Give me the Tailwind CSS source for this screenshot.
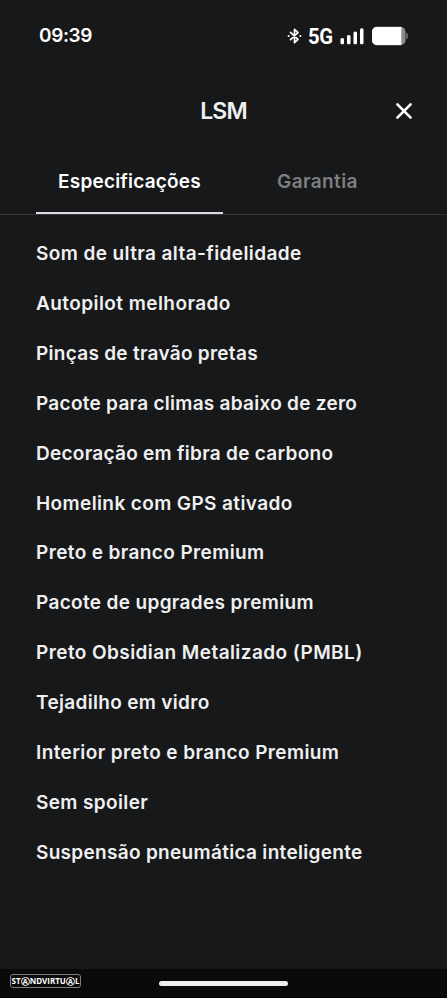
<!DOCTYPE html>
<html lang="pt">
<head>
<meta charset="utf-8">
<title>LSM</title>
<script src="https://cdn.jsdelivr.net/npm/@tailwindcss/browser@4"></script>
</head>
<body class="bg-[#17181a]">
<div class="flex h-[998px] w-[447px] flex-col overflow-hidden bg-[#17181a] font-[Inter,'Liberation_Sans',sans-serif] text-[#f0f0f1]">
  <header class="flex h-[72px] items-center justify-between pr-[38px] pl-[39px] text-white">
    <span class="text-[19px] leading-6 font-semibold tracking-[-0.4px]">09:39</span>
    <div class="flex items-center">
      <svg class="mr-[6px] h-[17px] w-[15px] -translate-y-[0.5px]" viewBox="0 0 15 17" fill="none" stroke="currentColor" stroke-width="1.7" stroke-linejoin="round" stroke-linecap="round"><path d="M3.500 4.800 11 11.800 7.500 15.200V1.800L11 5.200 3.500 12.200"/><path d="M1.600 8.500h.1M13.300 8.500h.1" stroke-width="2"/></svg>
      <span class="mr-[7px] w-[25px] pt-px font-[Roboto,sans-serif] text-[22px] leading-6 font-bold tracking-[-0.5px]"><span class="inline-block origin-left scale-x-[0.92]">5G</span></span>
      <svg class="mr-[8px] h-[17px] w-[24px] -translate-y-[0.5px]" viewBox="0 0 24 17" fill="currentColor"><rect x="0.500" y="10.500" width="3.500" height="6.500" rx="1.500"/><rect x="7" y="7.500" width="3.500" height="9.500" rx="1.500"/><rect x="13.500" y="4" width="3.500" height="13" rx="1.500"/><rect x="20" y="0.700" width="3.500" height="16.300" rx="1.500"/></svg>
      <svg class="h-[19px] w-[37px] -translate-y-[0.5px]" viewBox="0 0 37 19"><rect x="0" y="0.300" width="33.500" height="18.400" rx="5" fill="#8a8a8b"/><path d="M5 .3H29.300V18.700H5a5 5 0 0 1-5-5V5.300a5 5 0 0 1 5-5Z" fill="#fff"/><path d="M34.600 6.500c1.400.5 1.400 5.500 0 6Z" fill="#77787a" stroke="#77787a" stroke-width=".6"/></svg>
    </div>
  </header>
  <div class="grid h-[78px] grid-cols-[1fr_auto_1fr] items-center pr-[35px] pl-[35px]">
    <h1 class="col-start-2 text-[23px] leading-7 font-[570] tracking-[-0.9px]">LSM</h1>
    <svg class="-mt-px h-[16px] w-[16px] justify-self-end" viewBox="0 0 16 16" stroke="#fff" stroke-width="2.600" stroke-linecap="round"><path d="m1.400 1.400 13.200 13.200M14.600 1.400 1.400 14.600"/></svg>
  </div>
  <nav class="flex h-[65px] border-b border-[#343537] pl-[36px] text-[19px] font-[560]">
    <div class="flex h-[64px] w-[187px] justify-center border-b-2 border-[#dddae0] pt-[20px] leading-6 text-white"><span class="tracking-[0.2px]">Especificações</span></div>
    <div class="flex w-[189px] justify-center pt-[20px] leading-6 text-[#7e7f80]"><span class="tracking-[0.4px]">Garantia</span></div>
  </nav>
  <ul class="flex flex-1 flex-col pt-[14px] pl-[36px] text-[19px] leading-[49.900px] font-[560] whitespace-nowrap">
    <li><span class="tracking-[0.4px]">Som de ultra alta-fidelidade</span></li>
    <li><span class="tracking-[0.43px]">Autopilot melhorado</span></li>
    <li><span class="tracking-[0.28px]">Pinças de travão pretas</span></li>
    <li><span class="tracking-[0.27px]">Pacote para climas abaixo de zero</span></li>
    <li><span class="tracking-[0.27px]">Decoração em fibra de carbono</span></li>
    <li><span class="tracking-[0.39px]">Homelink com GPS ativado</span></li>
    <li><span class="tracking-[0.38px]">Preto e branco Premium</span></li>
    <li><span class="tracking-[0.34px]">Pacote de upgrades premium</span></li>
    <li><span class="tracking-[0.42px]">Preto Obsidian Metalizado (PMBL)</span></li>
    <li><span class="tracking-[0.32px]">Tejadilho em vidro</span></li>
    <li><span class="tracking-[0.4px]">Interior preto e branco Premium</span></li>
    <li><span class="tracking-[0.38px]">Sem spoiler</span></li>
    <li><span class="tracking-[0.31px]">Suspensão pneumática inteligente</span></li>
  </ul>
  <footer class="grid h-[29px] grid-cols-[149px_128px_1fr] border-b border-black bg-[#0a0a0b] pl-[10px]">
    <div class="mt-[5px] flex h-[14px] w-[71px] items-center justify-center rounded-[3px] border border-[#808080] font-['Open_Sans',sans-serif] text-[8px] leading-none font-bold text-white">
      <span>ST</span><span class="flex h-[9px] w-[9px] items-center justify-center rounded-full border border-white text-[7px]">A</span><span>NDVIRTU</span><span class="flex h-[9px] w-[9px] items-center justify-center rounded-full border border-white text-[7px]">A</span><span>L</span>
    </div>
    <div class="mt-[12px] h-[5px] w-[129px] rounded-full bg-[#eeeeee]"></div>
  </footer>
</div>
</body>
</html>
